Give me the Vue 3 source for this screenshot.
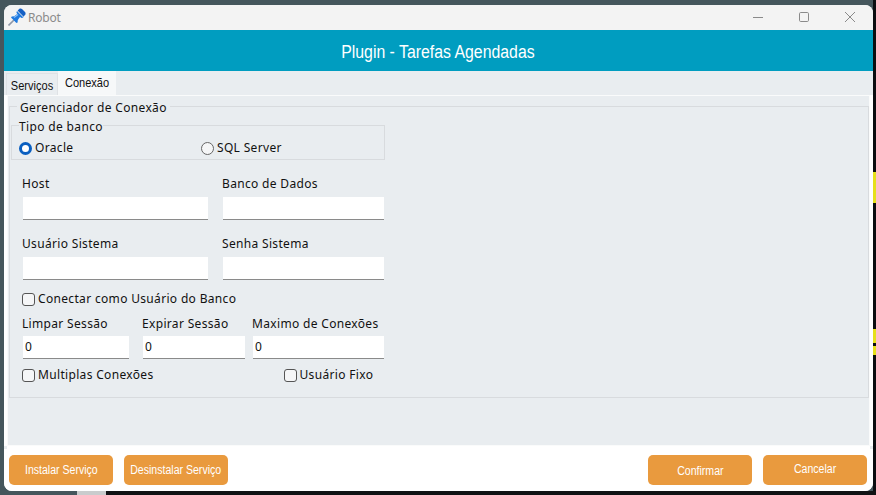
<script setup>
const spots = [
  { top: 172, height: 31 },
  { top: 329, height: 14 },
  { top: 346, height: 9 },
]
</script>

<template>
  <div class="desk">
    <span v-for="s in spots" :key="s.top" class="spot" :style="{ top: s.top + 'px', height: s.height + 'px' }"></span>
    <span class="wall-grey"></span>
    <span class="wall-black"></span>

    <div class="window">
      <div class="titlebar">
        <svg class="pin" width="18" height="18" viewBox="0 0 18 18">
          <path d="M0.5 17.5 L7 11" stroke="#8d97a8" stroke-width="1.6" fill="none" />
          <path d="M9 3 L15.5 9.5 L13.6 10 L12 9 L9.8 12 L9.6 14.4 L8.4 15 L3 9.6 L3.8 8.4 L6.2 8.2 L9.2 6 L8.4 4.6 Z" fill="#1f7ae0" />
          <path d="M9.6 2.6 L11.8 0.6 Q13 0 14 1 L17 4 Q18 5 17.4 6.2 L15.6 8.8 Z" fill="#1560c4" />
          <path d="M6 9.6 L10 6.6" stroke="#8cc0f5" stroke-width="1.2" fill="none" />
        </svg>
        <span class="app-name">Robot</span>
        <div class="win-ctrls">
          <svg width="12" height="12" viewBox="0 0 12 12"><path d="M1 6.5H11" stroke="#8a8a8a" /></svg>
          <svg width="12" height="12" viewBox="0 0 12 12"><rect x="1.5" y="1.5" width="9" height="9" rx="1.2" fill="none" stroke="#8a8a8a" /></svg>
          <svg width="12" height="12" viewBox="0 0 12 12"><path d="M1 1L11 11M11 1L1 11" stroke="#8a8a8a" /></svg>
        </div>
      </div>

      <div class="banner"><span class="narrow">Plugin - Tarefas Agendadas</span></div>

      <div class="body">
        <div class="tabs">
          <div class="tab first-tab"><span class="narrow wide">Serviços</span></div>
          <div class="tab active"><span class="narrow wide">Conexão</span></div>
        </div>

        <div class="panel">
          <fieldset class="group main">
            <legend>Gerenciador de Conexão</legend>

            <fieldset class="group db">
              <legend>Tipo de banco</legend>
              <div class="radios">
                <label class="opt oracle"><input type="radio" name="db" checked />Oracle</label>
                <label class="opt"><input type="radio" name="db" />SQL Server</label>
              </div>
            </fieldset>

            <div class="form-row first">
              <label class="field w-a">Host<input type="text" /></label>
              <label class="field w-b">Banco de Dados<input type="text" /></label>
            </div>
            <div class="form-row">
              <label class="field w-a">Usuário Sistema<input type="text" /></label>
              <label class="field w-b">Senha Sistema<input type="text" /></label>
            </div>

            <label class="opt check-one"><input type="checkbox" />Conectar como Usuário do Banco</label>

            <div class="form-row three">
              <label class="field w-c">Limpar Sessão<input type="text" value="0" /></label>
              <label class="field w-d">Expirar Sessão<input type="text" value="0" /></label>
              <label class="field w-e">Maximo de Conexões<input type="text" value="0" /></label>
            </div>

            <div class="check-row">
              <label class="opt"><input type="checkbox" />Multiplas Conexões</label>
              <label class="opt"><input type="checkbox" />Usuário Fixo</label>
            </div>
          </fieldset>
        </div>
      </div>

      <div class="footer">
        <button class="btn"><span class="narrow">Instalar Serviço</span></button>
        <button class="btn"><span class="narrow">Desinstalar Serviço</span></button>
        <span class="grow"></span>
        <button class="btn low"><span class="narrow">Confirmar</span></button>
        <button class="btn high"><span class="narrow">Cancelar</span></button>
      </div>
    </div>
  </div>
</template>

<style>
html, body { margin: 0; background: #0b0d10; }
</style>

<style scoped>
.desk {
  position: relative;
  width: 876px;
  height: 495px;
  overflow: hidden;
  padding: 5px 3px 4px 4px;
  box-sizing: border-box;
  background: linear-gradient(to right, #45565c 873px, #0b0d10 873px);
  font-family: "Noto Sans", sans-serif;
  color: #111;
}
.spot { position: absolute; left: 873px; width: 3px; background: #e6e01a; }
.wall-grey { position: absolute; left: 77px; top: 491px; width: 29px; height: 4px; background: #c9cccd; }
.wall-black { position: absolute; left: 106px; top: 491px; width: 770px; height: 4px; background: #101214; }

.narrow {
  display: inline-block;
  transform: scaleX(0.88);
  white-space: nowrap;
}
.narrow.wide { transform: scaleX(0.92); }
.window {
  position: relative;
  height: 486px;
  display: flex;
  flex-direction: column;
  background: #fff;
  border-radius: 8px;
  overflow: hidden;
}
.titlebar {
  height: 25px;
  flex: none;
  display: flex;
  align-items: center;
  background: #f3f3f3;
  padding-left: 4px;
}
.pin { margin-top: -1px; }
.app-name {
  margin-left: 2px;
  font-size: 12px;
  letter-spacing: -0.2px;
  color: #8b8b8b;
}
.win-ctrls {
  margin-left: auto;
  display: flex;
  gap: 34px;
  padding-right: 17px;
  margin-top: -1px;
}
.win-ctrls svg { display: block; }
.banner {
  height: 41px;
  flex: none;
  box-sizing: border-box;
  padding: 3px 1px 0 0;
  background: #009dc0;
  color: #fff;
  display: flex;
  align-items: center;
  justify-content: center;
  font-family: "Liberation Sans", sans-serif;
  font-size: 18px;
}
.body {
  height: 378px;
  flex: none;
  background: #e9edf0;
  display: flex;
  flex-direction: column;
}
.tabs {
  height: 24px;
  flex: none;
  display: flex;
  align-items: flex-end;
  padding-left: 2px;
  font-family: "Liberation Sans", sans-serif;
  font-size: 12px;
}
.tab {
  height: 22px;
  width: 52px;
  box-sizing: border-box;
  border: 1px solid #dfe2e5;
  border-bottom: 0;
  text-align: center;
  line-height: 24px;
  color: #111;
}
.first-tab { padding-left: 1px; }
.tab.active {
  height: 24px;
  width: 58px;
  background: #f6f8f9;
  border: 0;
  line-height: 24px;
}
.panel {
  flex: 1;
  margin: 0 3px 3px 3px;
  border: 1px solid #fafbfb;
  background: #e9edf0;
  padding: 1px 0 0 1px;
  box-shadow: -3px 0 0 #fff, 3px 0 0 #fff, 0 3px 0 #fff;
  box-sizing: border-box;
}
.group {
  margin: 0;
  border: 1px solid #d8dbde;
  padding: 0;
  min-width: 0;
}
legend {
  font-size: 12px;
  line-height: 16px;
  letter-spacing: 0.35px;
  padding: 0 3px;
}
.main {
  height: 301px;
  width: 860px;
  box-sizing: border-box;
}
.main > legend { margin-left: 7px; padding-top: 3px; }
.db {
  width: 374px;
  height: 45px;
  box-sizing: border-box;
  margin: -1px 0 0 1px;
}
.db > legend { margin-left: 7px; padding: 4px 0 0; }
.radios {
  display: flex;
  padding-left: 7px;
  margin-top: 5px;
}
.opt {
  display: inline-flex;
  align-items: center;
  font-size: 12px;
  letter-spacing: 0.33px;
  line-height: 16px;
  white-space: nowrap;
}
.oracle { width: 182px; }
input[type="radio"] {
  appearance: none;
  width: 13px;
  height: 13px;
  margin: 0 3px 0 0;
  border: 1px solid #666;
  border-radius: 50%;
  background: #f5f6f7;
  box-sizing: border-box;
}
input[type="radio"]:checked {
  border: 3.5px solid #0a5fc0;
  background: #fff;
}
input[type="checkbox"] {
  appearance: none;
  width: 13px;
  height: 13px;
  margin: 0 3px 0 0;
  border: 1px solid #555;
  border-radius: 3px;
  background: #f5f6f7;
  box-sizing: border-box;
}
.form-row {
  display: flex;
  margin: 16px 0 0 12px;
  gap: 14px;
}
.form-row.first { margin-top: 16px; }
.field {
  display: flex;
  flex-direction: column;
  font-size: 12px;
  letter-spacing: 0.33px;
  line-height: 16px;
}
.field input {
  display: block;
  margin: 5px 0 0 1px;
  height: 23px;
  box-sizing: border-box;
  border: 0;
  border-bottom: 1px solid #8a8a8a;
  background: #fff;
  padding: 0 0 2px 2px;
  font: inherit;
  color: #111;
  outline: none;
  width: calc(100% - 1px);
}
.w-a { width: 186px; }
.w-b { width: 162px; }
.check-one {
  display: flex;
  margin: 11px 0 0 12px;
}
.form-row.three { margin-top: 9px; gap: 0; }
.three .field input { margin-top: 4px; }
.w-c { width: 107px; margin-right: 13px; }
.w-d { width: 103px; margin-right: 7px; }
.w-e { width: 132px; }
.check-row {
  display: flex;
  justify-content: flex-start;
  gap: 130px;
  margin: 8px 0 0 12px;
}
.footer {
  flex: 1;
  display: flex;
  align-items: center;
  gap: 11px;
  padding: 0 6px 0 5px;
  background: #fff;
}
.grow { flex: 1; }
.btn {
  width: 104px;
  height: 30px;
  border: 0;
  border-radius: 5px;
  background: #e99a3e;
  color: #fff;
  padding: 0;
  font-family: "Liberation Sans", sans-serif;
  font-size: 12px;
}
.btn.low { padding-top: 2px; }
.btn.high { padding-bottom: 2px; }
</style>
